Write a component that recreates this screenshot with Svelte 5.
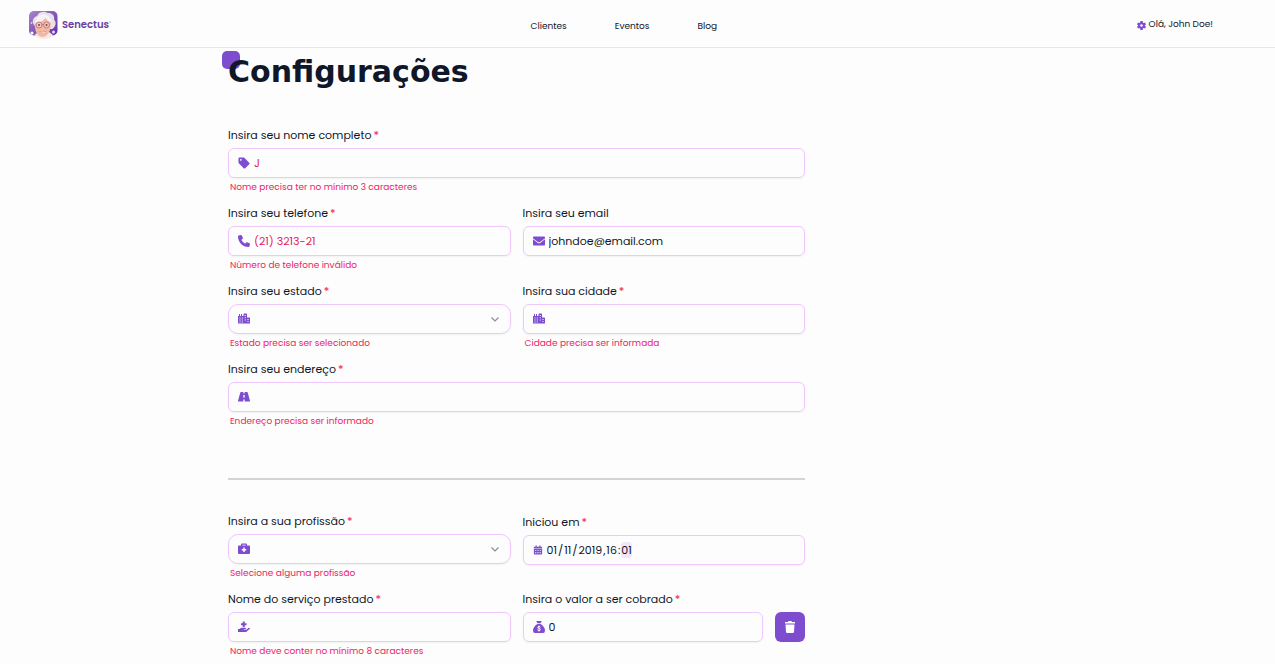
<script>
  let name = $state('J');
  let phone = $state('(21) 3213-21');
  let email = $state('johndoe@email.com');
  let price = $state('0');

  const dateParts = [
    { label: 'Dia', value: '01', after: '/' },
    { label: 'Mês', value: '11', after: '/' },
    { label: 'Ano', value: '2019', after: ',' },
    { label: 'Hora', value: '16', after: ':' },
    { label: 'Minuto', value: '01', after: '', active: true }
  ];
</script>

{#snippet icon(kind)}
  {#if kind === 'tag'}
    <svg class="icon" viewBox="0 0 512 512" aria-hidden="true"><path d="M20 235V68c0-27 21-48 48-48h167a48 48 0 0 1 34 14l208 208c19 19 19 49 0 68L310 477c-19 19-49 19-68 0L34 269a48 48 0 0 1-14-34zM120 80a40 40 0 1 0 0 80 40 40 0 0 0 0-80z" /></svg>
  {:else if kind === 'phone'}
    <svg class="icon" viewBox="0 0 512 512" aria-hidden="true"><path d="M164.9 24.6c-7.7-18.6-28-28.5-47.4-23.2l-88 24C12.1 30.2 0 46 0 64C0 311.4 200.6 512 448 512c18 0 33.8-12.1 38.6-29.5l24-88c5.3-19.4-4.6-39.7-23.2-47.4l-96-40c-16.3-6.8-35.2-2.1-46.3 11.6L304.7 368C234.3 334.7 177.3 277.7 144 207.3L193.3 167c13.7-11.2 18.4-30 11.6-46.3l-40-96z" /></svg>
  {:else if kind === 'mail'}
    <svg class="icon" viewBox="0 0 512 512" aria-hidden="true"><path d="M502.3 190.8c3.9-3.1 9.7-.2 9.7 4.7V400c0 26.5-21.5 48-48 48H48c-26.5 0-48-21.5-48-48V195.6c0-5 5.7-7.8 9.7-4.7 22.4 17.4 52.1 39.5 154.1 113.6 21.1 15.4 56.7 47.8 92.2 47.6 35.7.3 72-32.8 92.3-47.6 102-74.1 131.6-96.3 154-113.7zM256 320c23.2.4 56.6-29.2 73.4-41.4 132.7-96.3 142.8-104.7 173.4-128.7 5.8-4.5 9.2-11.5 9.2-18.9v-19c0-26.5-21.5-48-48-48H48c-26.5 0-48 21.5-48 48v19c0 7.4 3.4 14.3 9.2 18.9 30.6 23.9 40.7 32.4 173.4 128.7 16.8 12.2 50.2 41.8 73.4 41.4z" /></svg>
  {:else if kind === 'city'}
    <svg class="icon" viewBox="0 0 24 24" aria-hidden="true"><path fill-rule="evenodd" d="M0 6h2V2h2v4h2V2h2v4h3V2.500Q11 1 12.500 1h4Q18 1 18 2.500V9h4.500Q24 9 24 10.500V20q0 1-1 1H1q-1 0-1-1zM3 9v2h2V9zM7.500 9v2h2V9zM3 13v2h2v-2zM7.500 13v2h2v-2zM3 17v2h2v-2zM7.500 17v2h2v-2zM13.500 4v2h2V4zM13.500 8.500v2h2v-2zM13.500 13v2h2v-2zM19 12v2h2v-2zM19 16v2h2v-2z" /></svg>
  {:else if kind === 'road'}
    <svg class="icon" viewBox="0 0 24 24" aria-hidden="true"><path fill-rule="evenodd" d="M6 2h4.800v3h2.400V2H18q1 0 1.400 1l4.400 16q.6 2-1.400 2h-9v-4h-2.800v4h-9q-2 0-1.400-2L4.600 3Q5 2 6 2zM10.700 8l-.3 5h3.200l-.3-5z" /></svg>
  {:else if kind === 'medical'}
    <svg class="icon" viewBox="0 0 24 24" aria-hidden="true"><path fill-rule="evenodd" d="M6 5V3q0-2 2-2h8q2 0 2 2v2h4q2 0 2 2v13q0 2-2 2H2q-2 0-2-2V7q0-2 2-2zM8.500 3.500V5h7V3.500zM10.500 9v3h-3v3h3v3h3v-3h3v-3h-3V9z" /></svg>
  {:else if kind === 'care'}
    <svg class="icon" viewBox="0 0 24 24" aria-hidden="true"><path d="M9.500 1h4v3.500H17v4h-3.500V12h-4V8.500H6v-4h3.500zM0 16h3l2-1.500Q6.500 13.500 8 13.500h6.500q1.500 0 1.500 1.300T14.500 16.300H11v1h5.500l4.500-3.500q1.200-.8 2.300.1 1.200 1.200 0 2.300L17.500 21q-1.200 1-3 1H0z" /></svg>
  {:else if kind === 'calendar'}
    <svg class="icon small" viewBox="0 0 24 24" aria-hidden="true"><path fill-rule="evenodd" d="M6 1h3v3h6V1h3v3h2q2 0 2 2v2.500H2V6q0-2 2-2h2zM2 9.500h20V21q0 2-2 2H4q-2 0-2-2zM5 12v2h3v-2zM10.500 12v2h3v-2zM16 12v2h3v-2zM5 17.500v2h3v-2zM10.500 17.500v2h3v-2zM16 17.500v2h3v-2z" /></svg>
  {:else if kind === 'money'}
    <svg class="icon" viewBox="0 0 24 24" aria-hidden="true"><path d="M6.500 0h11l-2.300 4.500H8.800zM8.500 6h7Q24 12 24 19q0 5-4 5H4q-4 0-4-5Q0 12 8.500 6z" /><path d="M15 12.500Q14 11 12 11q-2.600 0-2.600 1.900c0 2.600 5.400 1.500 5.400 4.200 0 1.300-1.100 2-2.800 2q-2.200 0-3.200-1.600M12 9v12" fill="none" stroke="#fdfdfd" stroke-width="1.800" /></svg>
  {:else if kind === 'gear'}
    <svg class="icon gear" viewBox="0 0 24 24" aria-hidden="true"><path fill-rule="evenodd" d="M9 0h6l.7 4 2 1.200L21.500 4l2.500 5-3 2.300v1.400l3 2.300-2.500 5-3.800-1.200-2 1.200-.7 4H9l-.7-4-2-1.200L2.500 20 0 15l3-2.300v-1.400L0 9l2.500-5 3.800 1.200 2-1.200zM12 8.500a3.500 3.500 0 1 0 0 7 3.500 3.500 0 0 0 0-7z" /></svg>
  {:else if kind === 'trash'}
    <svg class="icon" viewBox="0 0 24 24" aria-hidden="true"><path d="M2 2h6l1-2h6l1 2h6v3H2zM3 7h18l-1 15q-.2 2-2 2H6q-1.800 0-2-2z" /></svg>
  {/if}
{/snippet}

{#snippet caption(id, text, required = true)}
  <label class="label" for={id}>{text}{#if required}<span class="required">*</span>{/if}</label>
{/snippet}

{#snippet picker(id)}
  <div class="box rounded">
    {@render icon(id === 'state' ? 'city' : 'medical')}
    <select {id}><option value=""></option></select>
    <svg class="chevron" viewBox="0 0 12 12" aria-hidden="true"><path d="M2.500 4.500L6 8l3.500-3.500" /></svg>
  </div>
{/snippet}

<header>
  <a class="brand" href="#inicio">
    <svg class="logo" viewBox="0 0 58 56" aria-hidden="true">
      <defs>
        <linearGradient id="tile" x1="0" y1="0" x2="1" y2="1">
          <stop offset="0" stop-color="#a984cc" /><stop offset="1" stop-color="#6330a5" />
        </linearGradient>
      </defs>
      <rect x="1" width="57" height="49" rx="10" fill="url(#tile)" />
      <path d="M12 29C5 23 9 12 17 10 20 1 32-1 38 4c9-1 15 6 13 13 6 6 3 15-3 19L15 36z" fill="#e9e1e9" />
      <path d="M12 48l9-7h19l9 7q-7 8-18 8t-19-8z" fill="#f5e8e5" />
      <path d="M12 23q2-13 17-15 14 3 16 15l-2 15q-5 14-15 14T14 39z" fill="#f4b9a2" />
      <path d="M12 25q0-14 17-19 14 2 18 18-9-3-13-10-8 9-22 11z" fill="#f7f2f4" />
      <g fill="#f6c5b5" stroke="#a76a78" stroke-width="1.500"><circle cx="21" cy="28" r="6" /><circle cx="36" cy="28" r="6" /><path d="M27 27h3" /></g>
      <circle cx="21" cy="28" r="2" fill="#6b4255" /><circle cx="36" cy="28" r="2" fill="#6b4255" />
      <path d="M22 41q7 4 13-1-1 6-6 6t-7-5z" fill="#fff" stroke="#d67370" />
      <circle cx="7" cy="44" r="3" fill="#fff" /><circle cx="50" cy="42" r="3" fill="#eadcf6" /><circle cx="6" cy="24" r="1.500" fill="#fff" />
    </svg>
    <span class="wordmark">Senectus<sup>®</sup></span>
  </a>
  <nav><a href="#clientes">Clientes</a><a href="#eventos">Eventos</a><a href="#blog">Blog</a></nav>
  <a class="account" href="#conta">{@render icon('gear')}Olá, John Doe!</a>
</header>

<main>
  <h1><span>Configurações</span></h1>
  <form>
    <div class="field wide">
      {@render caption('name', 'Insira seu nome completo')}
      <div class="box invalid">{@render icon('tag')}<input id="name" type="text" bind:value={name} /></div>
      <p class="error">Nome precisa ter no mínimo 3 caracteres</p>
    </div>
    <div class="field">
      {@render caption('phone', 'Insira seu telefone')}
      <div class="box invalid">{@render icon('phone')}<input id="phone" type="tel" bind:value={phone} /></div>
      <p class="error">Número de telefone inválido</p>
    </div>
    <div class="field">
      {@render caption('email', 'Insira seu email', false)}
      <div class="box">{@render icon('mail')}<input id="email" type="email" bind:value={email} /></div>
    </div>
    <div class="field">
      {@render caption('state', 'Insira seu estado')}
      {@render picker('state')}
      <p class="error">Estado precisa ser selecionado</p>
    </div>
    <div class="field">
      {@render caption('city', 'Insira sua cidade')}
      <div class="box">{@render icon('city')}<input id="city" type="text" /></div>
      <p class="error">Cidade precisa ser informada</p>
    </div>
    <div class="field wide">
      {@render caption('address', 'Insira seu endereço')}
      <div class="box">{@render icon('road')}<input id="address" type="text" /></div>
      <p class="error">Endereço precisa ser informado</p>
    </div>

    <hr class="wide" />

    <div class="field">
      {@render caption('job', 'Insira a sua profissão')}
      {@render picker('job')}
      <p class="error">Selecione alguma profissão</p>
    </div>
    <div class="field date-field">
      {@render caption('date-0', 'Iniciou em')}
      <div class="box date">
        {@render icon('calendar')}
        <div class="segments">
          {#each dateParts as part, i}
            <input id={`date-${i}`} class:active={part.active} aria-label={part.label} inputmode="numeric" value={part.value} />{#if part.after}<span>{part.after}</span>{/if}
          {/each}
        </div>
      </div>
    </div>
    <div class="field">
      {@render caption('service', 'Nome do serviço prestado')}
      <div class="box">{@render icon('care')}<input id="service" type="text" /></div>
      <p class="error">Nome deve conter no mínimo 8 caracteres</p>
    </div>
    <div class="price-row">
      <div class="field">
        {@render caption('price', 'Insira o valor a ser cobrado')}
        <div class="box">{@render icon('money')}<input id="price" type="text" inputmode="decimal" bind:value={price} /></div>
      </div>
      <button type="button" aria-label="Remover serviço">{@render icon('trash')}</button>
    </div>
  </form>
</main>

<style>
  :global(body) {
    background: #fdfdfd;
    color: #0f172a;
    font-family: Poppins, Inter, sans-serif;
    font-size: 11px;
  }
  header {
    box-sizing: border-box;
    height: 48px;
    padding: 0 62px 0 28px;
    border-bottom: 1px solid #e5e7eb;
    display: flex;
    align-items: center;
    justify-content: space-between;
  }
  a { color: inherit; text-decoration: none; }
  .brand { display: flex; align-items: center; gap: 4px; padding-top: 3px; }
  .logo { width: 30px; height: 28px; }
  .wordmark { color: #6b3fa0; font: 600 10px/16px Poppins, "Open Sans", sans-serif; }
  .wordmark sup { font-size: 4px; line-height: 1; vertical-align: 4px; }
  nav { display: flex; gap: 48px; font-size: 9px; line-height: 14px; padding-top: 4px; }
  .account { display: flex; align-items: center; gap: 3px; font-size: 9px; line-height: 14px; }
  .account .icon { margin-top: 3px; }
  main { max-width: 819px; margin: 0 auto; }
  h1 {
    margin: 0;
    padding: 6px 0 36px;
    font: 700 30px/36px "DejaVu Sans", sans-serif;
  }
  h1 span { position: relative; z-index: 0; }
  h1 span::before {
    content: "";
    position: absolute;
    z-index: -1;
    top: -3px;
    left: -6px;
    width: 18px;
    height: 18px;
    border-radius: 5px;
    background: #7e4dcf;
  }
  form {
    max-width: 577px;
    display: grid;
    grid-template-columns: repeat(2, minmax(0, 1fr));
    gap: 10px 12px;
  }
  .wide { grid-column: 1 / -1; }
  .field { min-width: 0; }
  .label { display: block; line-height: 18px; margin-bottom: 4px; }
  .required { color: #f43f5e; margin-left: 2px; font-weight: 500; }
  .box {
    box-sizing: border-box;
    height: 30px;
    padding: 0 9px;
    border: 1px solid #f0c6fd;
    border-radius: 6px;
    box-shadow: 0 1px 2px #0000000d;
    display: flex;
    align-items: center;
    gap: 4px;
  }
  .rounded { border-radius: 10px; }
  .icon { width: 12px; height: 12px; flex: none; fill: #7e4dcf; }
  .small { width: 10px; height: 10px; }
  .gear { width: 9px; height: 9px; }
  .chevron { width: 12px; height: 12px; flex: none; fill: none; stroke: #8b8d98; stroke-width: 1.2; }
  input, select {
    min-width: 0;
    border: 0;
    padding: 0;
    background: none;
    outline: none;
    color: inherit;
    font: inherit;
    line-height: 16px;
  }
  .box > input, select { flex: 1; }
  .box > input { height: 16px; padding-bottom: 1px; }
  select { appearance: none; }
  .invalid { color: #e11d5f; }
  .error { margin: 2px 0 0 2px; color: #ee2364; font-size: 9px; line-height: 14px; }
  hr { width: 100%; height: 2px; margin: 40px 0 22px; border: 0; background: #d4d4d8; }
  .date-field { padding-top: 1px; }
  .segments { display: flex; align-items: center; gap: 1px; }
  .segments input { field-sizing: content; border-radius: 4px; }
  .segments .active { background: #f3e3fb; }
  .price-row { display: flex; gap: 12px; }
  .price-row .field { flex: 1; }
  button {
    width: 30px;
    height: 30px;
    margin-top: 22px;
    padding: 0;
    border: 0;
    border-radius: 6px;
    background: #7e4dcf;
    display: grid;
    place-items: center;
  }
  button .icon { fill: #fff; }
</style>
